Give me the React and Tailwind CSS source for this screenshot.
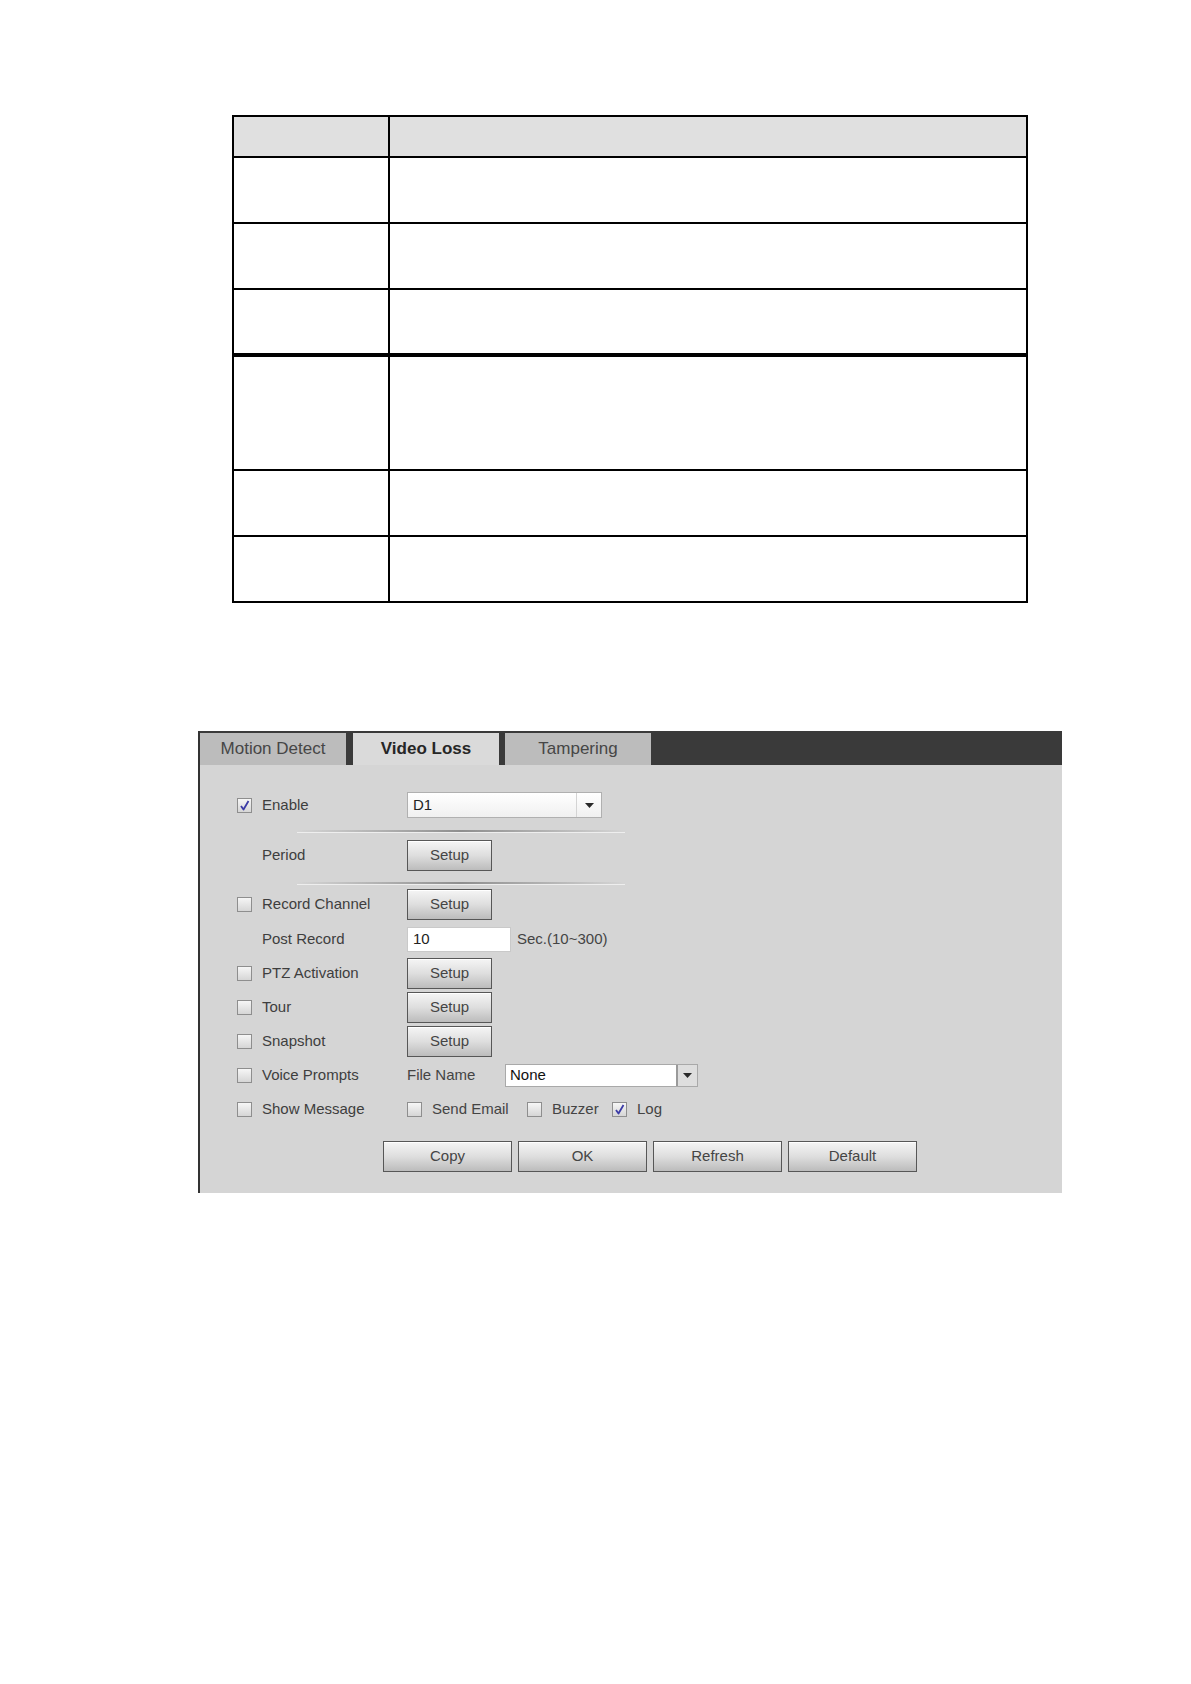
import React from 'react';

function Checkbox({ checked }) {
    return (
        <span className="flex h-[15px] w-[15px] shrink-0 items-center justify-center border border-[#8e8e8e] bg-linear-to-b from-[#f6f6f6] to-[#d6d6d6]">
            {checked && (
                <svg width="11" height="11" viewBox="0 0 11 11">
                    <path d="M2 6 L4.5 9.5 L9.5 1" fill="none" stroke="#3b3ba6" strokeWidth="1.8" strokeLinejoin="round" />
                </svg>
            )}
        </span>
    );
}

function Btn({ children, className = '' }) {
    return (
        <button className={`h-[31px] border border-[#575757] bg-linear-to-b from-[#f5f5f5] via-[#dedede] to-[#bcbcbc] text-[15px] text-[#454545] shadow-[inset_0_1px_0_#ffffff] ${className}`}>
            {children}
        </button>
    );
}

function Separator() {
    return <div className="ml-[60px] h-[2px] w-[328px] bg-linear-to-r from-transparent via-[#8e8e8e] to-transparent shadow-[0_1px_0_#eeeeee]" />;
}

function Row({ check, label, children, className = '' }) {
    return (
        <div className={`flex items-center ${className}`}>
            <div className="flex w-[170px] items-center">
                {check === undefined ? <span className="w-[15px]" /> : <Checkbox checked={check} />}
                <span className="ml-[10px] text-[15px] text-[#3e3e3e]">{label}</span>
            </div>
            {children}
        </div>
    );
}

function ArrowDown({ className = '' }) {
    return (
        <svg width="9" height="5" viewBox="0 0 9 5" className={className}>
            <path d="M0 0 H9 L4.5 5 Z" fill="#2a2a2a" />
        </svg>
    );
}

const tableRows = [66, 66, 67, 114, 66, 64];

export default function App() {
    return (
        <div className="h-[1684px] w-full bg-white pt-[115px] font-['Liberation_Sans',Arial,sans-serif]">
            {/* empty parameter table */}
            <div className="ml-[232px] w-[796px] border-2 border-black">
                <div className="flex h-[41px] border-b-2 border-black bg-[#e0e0e0]">
                    <div className="w-[156px] border-r-2 border-black" />
                    <div className="flex-1" />
                </div>
                {tableRows.map((h, i) => (
                    <div
                        key={i}
                        style={{ height: h }}
                        className={`flex border-black ${i === 2 ? 'border-b-4' : i === 5 ? '' : 'border-b-2'}`}
                    >
                        <div className="w-[156px] border-r-2 border-black" />
                        <div className="flex-1" />
                    </div>
                ))}
            </div>

            {/* Video Loss panel */}
            <div className="ml-[198px] mt-[128px] w-[864px] border-l-2 border-[#333333] bg-[#d5d5d5]">
                <div className="flex h-[34px] items-end bg-[#3a3a3a]">
                    <div className="flex h-[32px] w-[146px] items-center justify-center bg-[#bcbcbc] text-[17px] text-[#464646]">Motion Detect</div>
                    <div className="ml-[7px] flex h-[32px] w-[146px] items-center justify-center bg-[#dadada] text-[17px] font-bold text-[#262626]">Video Loss</div>
                    <div className="ml-[6px] flex h-[32px] w-[146px] items-center justify-center bg-[#bcbcbc] text-[17px] text-[#464646]">Tampering</div>
                </div>

                <div className="pl-[37px] pt-[27px] pb-[21px]">
                    <Row check={true} label="Enable" className="h-[26px]">
                        <div className="flex h-[26px] w-[195px] items-center border border-[#b0b0b0] bg-linear-to-b from-[#ffffff] to-[#f0f0f0]">
                            <span className="flex-1 pl-[5px] text-[15px] text-[#222]">D1</span>
                            <span className="flex h-full w-[25px] items-center justify-center border-l border-[#d4d4d4]">
                                <ArrowDown />
                            </span>
                        </div>
                    </Row>

                    <div className="mt-[12px]"><Separator /></div>

                    <Row label="Period" className="mt-[8px] h-[31px]">
                        <Btn className="w-[85px]">Setup</Btn>
                    </Row>

                    <div className="mt-[11px]"><Separator /></div>

                    <Row check={false} label="Record Channel" className="mt-[5px] h-[31px]">
                        <Btn className="w-[85px]">Setup</Btn>
                    </Row>

                    <Row label="Post Record" className="mt-[7px] h-[25px]">
                        <div className="flex h-[25px] w-[104px] items-center border border-[#c9c9c9] bg-white pl-[5px] text-[15px] text-[#222]">10</div>
                        <span className="ml-[6px] text-[15px] text-[#444]">Sec.(10~300)</span>
                    </Row>

                    <Row check={false} label="PTZ Activation" className="mt-[6px] h-[31px]">
                        <Btn className="w-[85px]">Setup</Btn>
                    </Row>
                    <Row check={false} label="Tour" className="mt-[3px] h-[31px]">
                        <Btn className="w-[85px]">Setup</Btn>
                    </Row>
                    <Row check={false} label="Snapshot" className="mt-[3px] h-[31px]">
                        <Btn className="w-[85px]">Setup</Btn>
                    </Row>

                    <Row check={false} label="Voice Prompts" className="mt-[7px] h-[23px]">
                        <span className="w-[98px] text-[15px] text-[#444]">File Name</span>
                        <div className="flex h-[23px] w-[193px] items-center border border-[#a9a9a9] bg-white">
                            <span className="flex-1 pl-[4px] text-[15px] text-[#111]">None</span>
                            <span className="flex h-full w-[21px] items-center justify-center border-l-2 border-[#9a9a9a] bg-[#dedede]">
                                <ArrowDown />
                            </span>
                        </div>
                    </Row>

                    <Row check={false} label="Show Message" className="mt-[11px] h-[23px]">
                        <div className="flex w-[120px] items-center">
                            <Checkbox checked={false} />
                            <span className="ml-[10px] text-[15px] text-[#444]">Send Email</span>
                        </div>
                        <div className="flex w-[85px] items-center">
                            <Checkbox checked={false} />
                            <span className="ml-[10px] text-[15px] text-[#444]">Buzzer</span>
                        </div>
                        <div className="flex items-center">
                            <Checkbox checked={true} />
                            <span className="ml-[10px] text-[15px] text-[#444]">Log</span>
                        </div>
                    </Row>

                    <div className="mt-[20px] flex gap-[6px] pl-[146px]">
                        <Btn className="w-[129px]">Copy</Btn>
                        <Btn className="w-[129px]">OK</Btn>
                        <Btn className="w-[129px]">Refresh</Btn>
                        <Btn className="w-[129px]">Default</Btn>
                    </div>
                </div>
            </div>
        </div>
    );
}
